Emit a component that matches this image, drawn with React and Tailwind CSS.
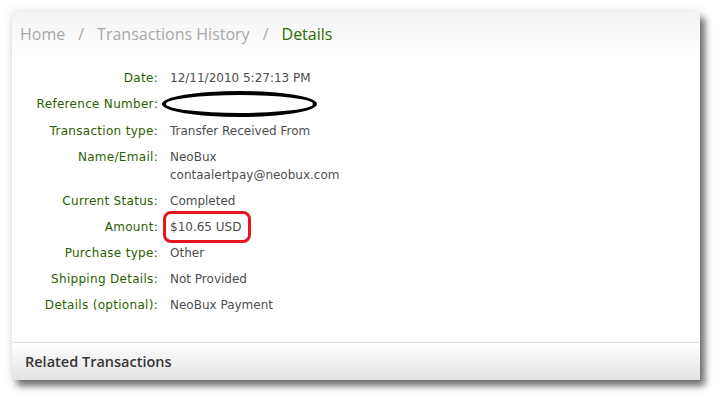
import React from 'react';

const rows = [
  { label: 'Date:', value: '12/11/2010 5:27:13 PM' },
  { label: 'Reference Number:', value: null, mark: 'ellipse' },
  { label: 'Transaction type:', value: 'Transfer Received From' },
  { label: 'Name/Email:', value: ['NeoBux', 'contaalertpay@neobux.com'] },
  { label: 'Current Status:', value: 'Completed' },
  { label: 'Amount:', value: '$10.65 USD', mark: 'box' },
  { label: 'Purchase type:', value: 'Other' },
  { label: 'Shipping Details:', value: 'Not Provided' },
  { label: 'Details (optional):', value: 'NeoBux Payment' },
];

const DetailRow = ({ row }) => {
  let content;
  if (row.mark === 'ellipse') {
    content = (
      <span className="-mb-[3px] -mt-[4px] -ml-2 block h-[26px] w-[155px] rounded-[50%] border-4 border-black"></span>
    );
  } else if (row.mark === 'box') {
    content = (
      <span className="-my-[7px] -ml-[7px] block rounded-lg border-[3px] border-[#e5141f] py-1 pl-1 pr-[7px]">
        {row.value}
      </span>
    );
  } else if (Array.isArray(row.value)) {
    content = row.value.map((v) => <div key={v}>{v}</div>);
  } else {
    content = row.value;
  }

  return (
    <div className="flex items-start">
      <div className="w-[146px] shrink-0 text-right tracking-[0.3px] text-[#2c5e00]">{row.label}</div>
      <div className="pl-3 text-[#4d4d4d]">{content}</div>
    </div>
  );
};

const App = () => {
  return (
    <div className="h-[401px] w-[720px] bg-white pl-3 pt-3" style={{ fontFamily: '"DejaVu Sans", sans-serif' }}>
      <div className="flex h-[368px] w-[688px] flex-col bg-white shadow-[5px_6px_7px_rgba(0,0,0,0.55),0_0_10px_rgba(0,0,0,0.12)]">
        <div
          className="flex h-[44px] items-center gap-[13px] bg-gradient-to-b from-[#f3f3f3] to-white pl-2 text-[16px] text-[#a8a8a8]"
          style={{ fontFamily: '"Open Sans", sans-serif' }}
        >
          <span>Home</span>
          <span>/</span>
          <span>Transactions History</span>
          <span>/</span>
          <span className="font-medium text-[#2f6a00]">Details</span>
        </div>

        <div className="flex flex-col gap-2 pt-[13px] text-[12px] leading-[18px]">
          {rows.map((row) => (
            <DetailRow key={row.label} row={row} />
          ))}
        </div>

        <div className="mt-auto flex h-[38px] items-center border-t border-[#dedede] bg-gradient-to-b from-white to-[#e3e3e3] pl-[13px]">
          <span
            className="text-[14.5px] font-semibold text-[#363636]"
            style={{ fontFamily: '"Open Sans", sans-serif' }}
          >
            Related Transactions
          </span>
        </div>
      </div>
    </div>
  );
};

export default App;
